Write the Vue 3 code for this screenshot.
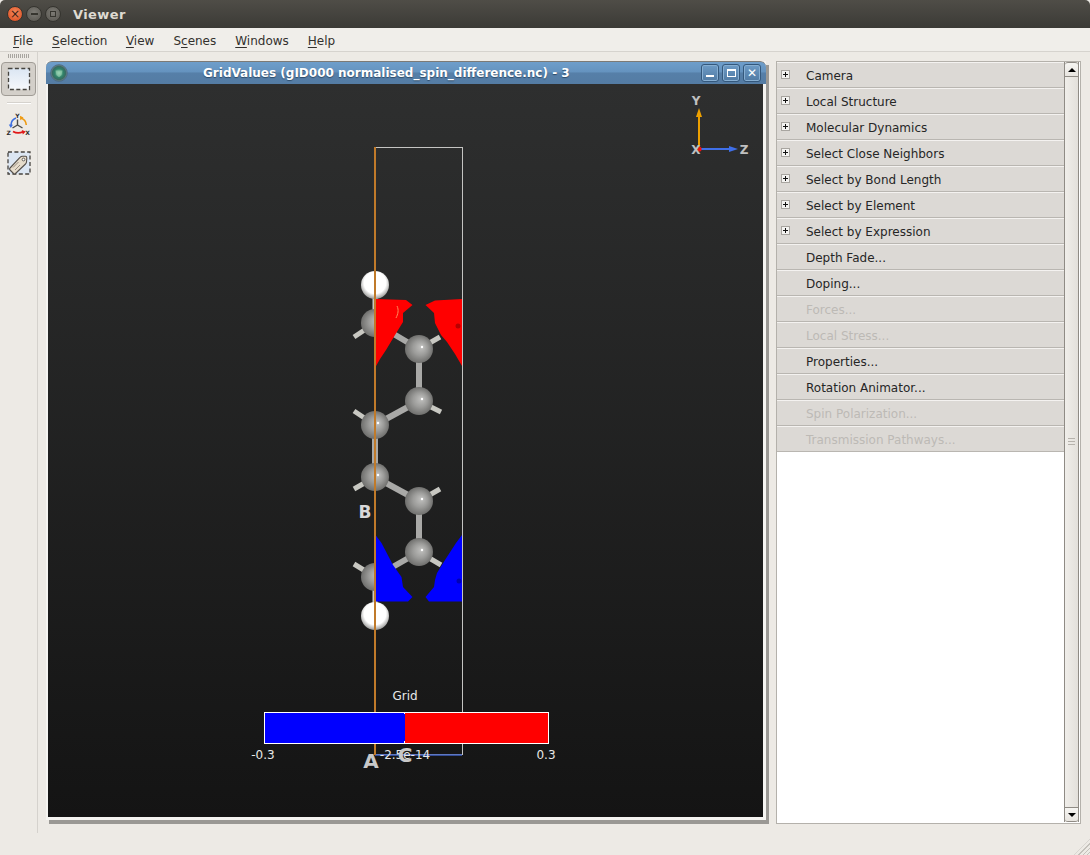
<script setup>
const menus = [
  { k: 'F', r: 'ile' }, { k: 'S', r: 'election' }, { k: 'V', r: 'iew' },
  { p: 'S', k: 'c', r: 'enes' }, { k: 'W', r: 'indows' }, { k: 'H', r: 'elp' }
]
const rows = [
  { t: 'Camera', plus: true }, { t: 'Local Structure', plus: true }, { t: 'Molecular Dynamics', plus: true },
  { t: 'Select Close Neighbors', plus: true }, { t: 'Select by Bond Length', plus: true },
  { t: 'Select by Element', plus: true }, { t: 'Select by Expression', plus: true },
  { t: 'Depth Fade...' }, { t: 'Doping...' }, { t: 'Forces...', off: true }, { t: 'Local Stress...', off: true },
  { t: 'Properties...' }, { t: 'Rotation Animator...' }, { t: 'Spin Polarization...', off: true },
  { t: 'Transmission Pathways...', off: true }
]
const carbons = [[375,323],[419,349],[419,401],[375,425],[375,477],[419,501],[419,552],[375,577]]
const bonds = [[375,323,419,349],[419,349,419,401],[419,401,375,425],[375,425,375,477],[375,477,419,501],[419,501,419,552],[419,552,375,577]]
const stubs = [[375,323,354,337],[419,349,440,337],[419,401,441,412],[375,425,354,411],[375,477,354,489],[419,501,440,489],[419,552,441,565],[375,577,354,564],[375,285,375,323],[375,577,375,616]]
</script>

<template>
  <div class="app">
    <header class="titlebar">
      <div class="lights">
        <span class="light close">×</span>
        <span class="light"><i class="dash"></i></span>
        <span class="light"><i class="sq"></i></span>
      </div>
      <span class="apptitle">Viewer</span>
    </header>
    <nav class="menubar">
      <span v-for="m in menus" :key="m.r" class="menu">{{ m.p }}<u>{{ m.k }}</u>{{ m.r }}</span>
    </nav>
    <main class="main">
      <aside class="toolbar">
        <div class="grip"></div>
        <button class="tool active">
          <svg width="24" height="24" viewBox="0 0 24 24">
            <defs><linearGradient id="sel" x1="0" y1="0" x2="0" y2="1"><stop offset="0" stop-color="#dbe6f3"/><stop offset="1" stop-color="#f6f8fb"/></linearGradient></defs>
            <rect x="1.500" y="1.500" width="21" height="21" fill="url(#sel)" stroke="#45433f" stroke-width="1.300" stroke-dasharray="4 2.400"/>
          </svg>
        </button>
        <div class="sep"></div>
        <div class="tool">
          <svg width="26" height="26" viewBox="0 0 26 26">
            <path d="M11.500 13V7.500M11.500 13L6.500 16M11.500 13l5 3" stroke="#4a4a48" stroke-width="1.400" fill="none"/>
            <path d="M10 6C7 7 5.200 9.500 5 13" stroke="#3d6fe0" stroke-width="1.600" fill="none"/>
            <path d="M2.800 12.500l2 3.500 2.200-3.300z" fill="#3d6fe0"/>
            <path d="M15 6.200c3 .8 5 3.400 5.300 6.800" stroke="#ee9a10" stroke-width="1.600" fill="none"/>
            <path d="M14 3.800l.2 4.400 3.300-2.800z" fill="#ee9a10"/>
            <path d="M7 19.500c3 1.700 7 1.700 10 .3" stroke="#e01818" stroke-width="1.800" fill="none"/>
            <path d="M15.800 18l4 1.500-3 2.900z" fill="#e01818"/>
            <text x="11.500" y="6" class="ax">Y</text><text x="2.800" y="23" class="ax">Z</text><text x="21.500" y="23" class="ax">X</text>
          </svg>
        </div>
        <div class="tool">
          <svg width="26" height="26" viewBox="0 0 26 26">
            <rect x="2" y="2" width="22" height="22" fill="#dce6f2" stroke="#45433f" stroke-width="1.300" stroke-dasharray="4 2.400"/>
            <path d="M4 18L14 7.500Q15 6.300 16.500 6.300L19.500 6.300Q20.800 6.300 20.800 8L20.500 12Q20.400 13 19.500 14L9.500 23.500Q8.500 24.500 7.500 23.500L4 20Q3 19 4 18Z" fill="#e6dccb" stroke="#55504a" stroke-width="1.100"/>
            <circle cx="17.500" cy="9.500" r="1.400" fill="#fff" stroke="#55504a" stroke-width=".9"/>
            <path d="M7 17.500l5.500-5.500M9 20l5-5" stroke="#8d857a" stroke-width=".9"/>
          </svg>
        </div>
      </aside>

      <section class="subwindow">
        <div class="subtitle">
          <svg class="subicon" width="18" height="18" viewBox="0 0 18 18">
            <defs><radialGradient id="orb"><stop offset="0" stop-color="#8fd0a8"/><stop offset=".55" stop-color="#2f8068"/><stop offset=".8" stop-color="#3a6a62"/><stop offset="1" stop-color="#7c8f92"/></radialGradient></defs>
            <circle cx="9" cy="9" r="8.300" fill="url(#orb)" stroke="#45627a" stroke-width=".8"/>
            <path d="M5.500 6.500h7l-1 4.500-2.500 2.200-2.500-2.200z" fill="#a4d8bb" opacity=".55"/>
          </svg>
          <span class="subname">GridValues (gID000 normalised_spin_difference.nc) - 3</span>
          <div class="subbtns">
            <span class="subbtn"><i class="b-min"></i></span>
            <span class="subbtn"><i class="b-max"></i></span>
            <span class="subbtn x">✕</span>
          </div>
        </div>
        <div class="viewport">
          <svg class="scene" width="715" height="733" viewBox="48 84 715 733">
            <defs>
              <radialGradient id="carbon" cx=".5" cy=".5" r=".52" fx=".6" fy=".42">
                <stop offset="0" stop-color="#c2c2c0"/><stop offset=".5" stop-color="#9c9c9a"/><stop offset="1" stop-color="#6c6c6a"/>
              </radialGradient>
              <radialGradient id="hyd" cx=".5" cy=".42" r=".6">
                <stop offset="0" stop-color="#fff"/><stop offset=".65" stop-color="#fff"/><stop offset="1" stop-color="#8d8d8b"/>
              </radialGradient>
            </defs>

            <line v-for="(s,i) in stubs" :key="'s'+i" :x1="s[0]" :y1="s[1]" :x2="s[2]" :y2="s[3]" class="stub"/>
            <line v-for="(b,i) in bonds" :key="'b'+i" :x1="b[0]" :y1="b[1]" :x2="b[2]" :y2="b[3]" class="bond"/>
            <template v-for="(c,i) in carbons" :key="'c'+i">
              <circle :cx="c[0]" :cy="c[1]" r="14" fill="url(#carbon)"/>
              <circle :cx="c[0] + 3" :cy="c[1] - 2" r="1.200" fill="#fff"/>
            </template>

            <polygon fill="#ff0000" points="375.500,299 406,300 412.500,305 403,313 403,322 395,335 386,350 380,359 375.500,367"/>
            <polygon fill="#ff0000" points="462,299 435,300.500 425.500,305 434,313 435,323 441,335 447,342 455,354 462,366"/>
            <path d="M397 306c2 4 1 8-1 12" stroke="#ff8a5a" stroke-width="1" fill="none"/>
            <circle cx="458" cy="326" r="2.500" fill="#b80000"/>
            <polygon fill="#0000ff" points="375.500,535 381.500,543 393,565 401.500,577 403,587 412.500,597 408,601.500 375.500,601.500"/>
            <polygon fill="#0000ff" points="462,535 456,543 445,560 437,573 435,580 434,587 425.500,597 429,601.500 462,601.500"/>
            <circle cx="459" cy="581" r="2.500" fill="#0000b4"/>

            <circle cx="375" cy="285" r="14" fill="url(#hyd)"/>
            <circle cx="375" cy="616" r="14" fill="url(#hyd)"/>

            <rect x="375.500" y="147.500" width="87" height="607" fill="none" stroke="#c4c4c2" stroke-width="1"/>
            <line x1="375" y1="755" x2="462" y2="755" stroke="#3e5fc0" stroke-width="1.400"/>
            <line x1="375" y1="147" x2="375" y2="755" stroke="#c07a2a" stroke-width="2"/>

            <text x="365" y="518" class="lab">B</text>
            <text x="371" y="768" class="lab big">A</text>

            <rect x="264.500" y="712.500" width="284" height="31" fill="#ff0000" stroke="#fff"/>
            <rect x="265" y="713" width="140" height="30" fill="#0000ff"/>
            <line x1="404.500" y1="713" x2="404.500" y2="743" stroke="#fff" stroke-dasharray="1 27 2"/>
            <text x="405" y="700" class="leg">Grid</text>
            <text x="263" y="759" class="leg">-0.3</text>
            <text x="405" y="759" class="leg">-2.5e-14</text>
            <text x="546" y="759" class="leg">0.3</text>
            <text x="405" y="762" class="lab big">C</text>

            <line x1="699" y1="149" x2="699" y2="112" stroke="#eda000" stroke-width="2"/>
            <polygon points="699,108 696,117 702,117" fill="#eda000"/>
            <line x1="699" y1="149" x2="733" y2="149" stroke="#3f6fe8" stroke-width="2"/>
            <polygon points="738,149 729,146 729,152" fill="#3f6fe8"/>
            <circle cx="699" cy="149" r="2.600" fill="#f01010"/>
            <text x="696" y="105" class="axis">Y</text>
            <text x="696" y="153.500" class="axis">X</text>
            <text x="744" y="153.500" class="axis">Z</text>
          </svg>
        </div>
      </section>

      <aside class="panel">
        <div class="list">
          <div v-for="r in rows" :key="r.t" class="row" :class="{ off: r.off }">
            <span v-if="r.plus" class="plus"></span>
            <span class="rowtext">{{ r.t }}</span>
          </div>
        </div>
        <div class="scroll">
          <div class="arrow top"><i class="up"></i></div>
          <div class="track"><i class="gr"></i><i class="gr"></i><i class="gr"></i></div>
          <div class="arrow bottom"><i class="down"></i></div>
        </div>
      </aside>
    </main>
    <footer class="status"><span class="sizegrip"></span></footer>
  </div>
</template>

<style>
html, body { margin: 0; background: #edeae5; }
</style>

<style scoped>
.app { width: 1090px; height: 855px; display: flex; flex-direction: column; background: #edeae5; font-family: "DejaVu Sans", sans-serif; font-size: 12px; color: #2b2b2b; overflow: hidden; }
.titlebar { height: 28px; flex: none; display: flex; align-items: center; background: linear-gradient(#4f4d47, #3b3a36); border-radius: 5px 5px 0 0; }
.lights { display: flex; gap: 3px; padding-left: 7px; }
.light { width: 16px; height: 16px; border-radius: 50%; background: radial-gradient(circle at 50% 40%, #7d7b75, #56544e); border: 1px solid #35342f; box-sizing: border-box; display: flex; align-items: center; justify-content: center; color: #3b2015; font-size: 12px; line-height: 1; }
.light.close { background: radial-gradient(circle at 50% 40%, #f48a5c, #d9481c); }
.dash { width: 7px; height: 2px; background: #36352f; }
.sq { width: 6px; height: 6px; border: 1px solid #36352f; box-sizing: border-box; }
.apptitle { margin-left: 12px; color: #dfdbd2; font-weight: 700; font-size: 13px; letter-spacing: .4px; }
.menubar { height: 21px; padding: 2px 0 0 13px; flex: none; display: flex; align-items: center; gap: 19px; background: #f0eeea; border-bottom: 1px solid #d6d3ce; font-size: 12px; color: #33312e; }
.menu:nth-child(2) { margin-right: -0.500px; }
.main { flex: 1; min-height: 0; display: flex; align-items: flex-start; }
.toolbar { width: 37px; height: 781px; flex: none; border-right: 1px solid #d5d2cd; display: flex; flex-direction: column; align-items: center; }
.grip { width: 22px; height: 4px; margin: 2px 0 4px; background: repeating-linear-gradient(90deg, #a8a5a0 0 1px, transparent 1px 2px); }
.tool { width: 35px; height: 34px; padding: 0; border: 1px solid transparent; box-sizing: border-box; display: flex; align-items: center; justify-content: center; background: none; margin-bottom: 4px; }
.tool.active { background: #d3cfc9; border-color: #a09c96; border-radius: 4px; margin-bottom: 6px; }
.sep { width: 24px; height: 1px; background: #d5d2cd; border-bottom: 1px solid #fff; margin-bottom: 4px; }
.ax { font-size: 6px; font-weight: 700; text-anchor: middle; fill: #2d2d2d; }
.subwindow { width: 720px; height: 759px; flex: none; margin: 9px 0 0 8px; display: flex; flex-direction: column; box-shadow: 3px 4px 0 #9a9894; background: #f5f4f1; }
.subtitle { height: 23px; flex: none; position: relative; display: flex; align-items: center; background: linear-gradient(#6e9ecb 0, #6593bf 45%, #567fa8 50%, #547ca4 100%); border-radius: 6px 6px 0 0; border-top: 1px solid #7c7a76; box-sizing: border-box; }
.subicon { margin-left: 4px; flex: none; }
.subname { position: absolute; left: 157px; color: #fff; font-weight: 700; font-size: 12px; white-space: nowrap; text-shadow: 0 1px 1px #2d4a68; }
.subbtns { position: absolute; right: 5px; top: 2px; display: flex; gap: 3px; }
.subbtn { width: 18px; height: 18px; border: 1px solid #34587c; border-radius: 3px; box-sizing: border-box; display: flex; align-items: center; justify-content: center; color: #fff; font-size: 12px; font-weight: 700; background: linear-gradient(#6d9bc6, #507aa3); box-shadow: inset 0 0 0 1px #86aed2; }
.b-min { width: 8px; height: 2px; background: #fff; margin-top: 6px; }
.b-max { width: 9px; height: 8px; border: 1px solid #fff; border-top-width: 2px; box-sizing: border-box; }
.viewport { width: 715px; height: 733px; flex: none; margin-left: 2px; background: linear-gradient(#2e2f2f, #141414); }
.scene { display: block; }
.stub { stroke: #c8c8c2; stroke-width: 5; }
.bond { stroke: #a9a9a7; stroke-width: 6; }
.lab { font-family: "DejaVu Sans", sans-serif; font-size: 17px; font-weight: 700; fill: #d8d8d8; text-anchor: middle; }
.lab.big { font-size: 20px; fill: #c8c8c8; }
.leg { font-family: "DejaVu Sans", sans-serif; font-size: 12px; fill: #e8e8e8; text-anchor: middle; }
.axis { font-family: "DejaVu Sans", sans-serif; font-size: 12px; font-weight: 700; fill: #c0c0c0; text-anchor: middle; }
.panel { width: 305px; height: 763px; flex: none; margin: 9px 0 0 10px; padding-bottom: 1px; box-sizing: border-box; border: 1px solid #b4b1ab; background: #fff; display: flex; }
.list { flex: 1; min-width: 0; }
.row { height: 26px; box-sizing: border-box; display: flex; align-items: center; position: relative; background: #dcd9d5; border-top: 1px solid #f4f2f0; border-bottom: 1px solid #b9b6b1; color: #262626; }
.row.off { color: #bdbab5; }
.rowtext { position: absolute; left: 29px; margin-top: 2px; }
.plus { position: absolute; left: 4px; top: 7px; width: 9px; height: 9px; box-sizing: border-box; border: 1px solid #a8a5a0; background: linear-gradient(#111, #111) center/5px 1px no-repeat, linear-gradient(#111, #111) center/1px 5px no-repeat, #f4f3f1; }
.scroll { width: 15px; margin-right: 1px; flex: none; display: flex; flex-direction: column; background: linear-gradient(90deg, #f0eeea, #e3e0db); border-left: 1px solid #8f8b85; border-right: 1px solid #8f8b85; box-sizing: border-box; }
.arrow { height: 15px; flex: none; display: flex; align-items: center; justify-content: center; border-bottom: 1px solid #8f8b85; background: linear-gradient(#f6f5f2, #e8e5e0); box-sizing: border-box; }
.arrow.top { border-top: 1px solid #8f8b85; border-radius: 3px 3px 0 0; }
.arrow.bottom { border-top: 1px solid #8f8b85; border-radius: 0 0 3px 3px; }
.up { border: 4px solid transparent; border-top: 0; border-bottom: 4px solid #000; width: 0; }
.down { border: 4px solid transparent; border-bottom: 0; border-top: 4px solid #000; width: 0; }
.track { flex: 1; display: flex; flex-direction: column; align-items: center; justify-content: flex-start; gap: 2px; padding-top: 361px; }
.gr { width: 7px; height: 1px; background: #b6b2ac; }
.status { flex: none; height: 22px; position: relative; }
.sizegrip { position: absolute; right: 0; bottom: 0; width: 16px; height: 16px; background: repeating-linear-gradient(135deg, transparent 0 2px, #c4c1bb 2px 3px); clip-path: polygon(100% 0, 100% 100%, 0 100%); }
u { text-decoration-thickness: 1px; text-underline-offset: 2px; }
</style>
